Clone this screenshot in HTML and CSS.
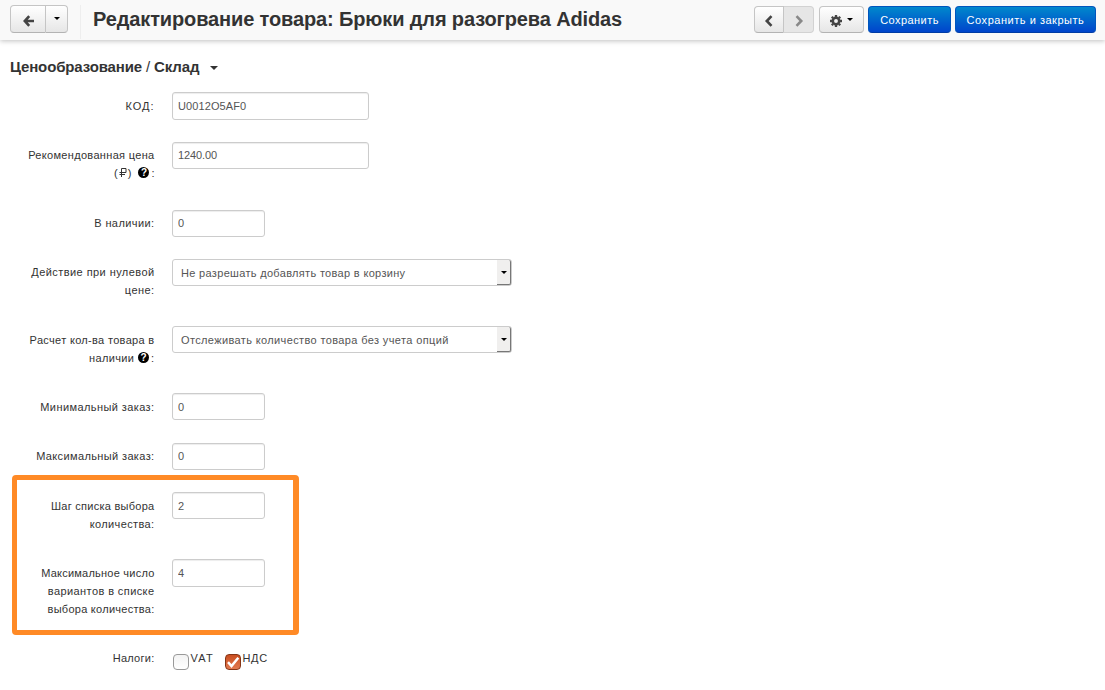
FILE: index.html
```
<!DOCTYPE html>
<html lang="ru">
<head>
<meta charset="utf-8">
<title>Редактирование товара</title>
<link rel="stylesheet" href="styles.css">
</head>
<body>
<header class="topbar">
  <div class="group back">
    <button class="btn back-main"><svg width="12" height="12" viewBox="0 0 12 12"><path d="M6.2 1.2 1.8 6l4.4 4.8M2 6h9" fill="none" stroke="#444" stroke-width="2.6"/></svg></button>
    <button class="btn back-drop"><i class="caret"></i></button>
  </div>
  <h1>Редактирование товара: Брюки для разогрева Adidas</h1>
  <div class="group pager">
    <button class="btn"><svg width="10" height="12" viewBox="0 0 10 12"><path d="M7.5 1.2 2.8 6l4.7 4.8" fill="none" stroke="#444" stroke-width="2.6"/></svg></button>
    <button class="btn disabled"><svg width="10" height="12" viewBox="0 0 10 12"><path d="M2.5 1.2 7.2 6l-4.7 4.8" fill="none" stroke="#888" stroke-width="2.6"/></svg></button>
  </div>
  <button class="btn gear"><svg width="12" height="12" viewBox="0 0 12 12"><circle cx="6" cy="6" r="3.2" fill="none" stroke="#444" stroke-width="2.5"/><path d="M6 0v2M6 10v2M0 6h2M10 6h2M1.8 1.8l1.3 1.3M8.9 8.9l1.3 1.3M10.2 1.8 8.9 3.1M3.1 8.9l-1.3 1.3" stroke="#444" stroke-width="2.3"/></svg><i class="caret"></i></button>
  <button class="btn primary save">Сохранить</button>
  <button class="btn primary close">Сохранить и закрыть</button>
</header>
<main>
  <h2><span>Ценообразование <span class="slash">/</span> Склад</span><i class="caret"></i></h2>
  <form class="fields">
    <label class="caps">КОД:</label><div><input class="wide code" value="U0012O5AF0"></div>
    <label class="up"><span class="ls3">Рекомендованная цена</span><br>(<svg class="rub" width="9" height="9" viewBox="0 0 9 9"><path d="M2.5 9V.5h4.5v4H.5M.5 6.5h5.5" fill="none" stroke="#333"/></svg>) <i class="help"><b>?</b></i>:</label><div><input class="wide price" value="1240.00"></div>
    <label class="up ls4">В наличии:</label><div><input class="raised" value="0"></div>
    <label class="up ls45">Действие при нулевой<br>цене:</label><div><div class="select"><span class="ls3">Не разрешать добавлять товар в корзину</span><i class="arrow"><i class="caret"></i></i></div></div>
    <label class="ls3">Расчет кол-ва товара в<br>наличии<i class="help"><b>?</b></i>:</label><div><div class="select"><span class="ls37">Отслеживать количество товара без учета опций</span><i class="arrow"><i class="caret"></i></i></div></div>
    <label class="ls4">Минимальный заказ:</label><div><input value="0"></div>
    <label class="up ls37">Максимальный заказ:</label><div><input class="raised" value="0"></div>
    <label><span class="ls27">Шаг списка выбора</span><br><span class="ls37">количества:</span></label><div><input value="2"></div>
    <label><span class="ls23">Максимальное число</span><br><span class="ls4">вариантов в списке</span><br><span class="ls27">выбора количества:</span></label><div><input class="code" value="4"></div>
    <label class="up ls27">Налоги:</label>
    <div class="taxes"><i class="check"></i><span class="vat">VAT</span><i class="check on"><svg width="14" height="14" viewBox="0 0 14 14"><path d="M2 7.2 5.5 11 12.3 2.8" fill="none" stroke="#fff" stroke-width="2.5"/></svg></i><span class="nds">НДС</span></div>
  </form>
  <div class="highlight"></div>
</main>
</body>
</html>
```
FILE: styles.css
```
* { box-sizing: border-box; }
body { margin: 0; width: 1105px; height: 690px; overflow: hidden; background: #fff; color: #333; font: 11px/18px "Liberation Sans", Arial, sans-serif; }
.topbar { display: flex; align-items: flex-start; height: 40px; padding: 6px 9px 0 10px; background: #f9f9f9; box-shadow: 0 1px 5px rgba(0,0,0,.25); }
.group { display: flex; }
.btn { display: flex; align-items: center; justify-content: center; height: 27px; padding: 0; border: 1px solid #c5c5c5; border-bottom-color: #b3b3b3; border-radius: 4px; background: linear-gradient(#fff, #e6e6e6); font: 11px/18px "Liberation Sans", Arial, sans-serif; color: #333; }
.group .btn:first-child { border-radius: 4px 0 0 4px; }
.group .btn:last-child { border-radius: 0 4px 4px 0; border-left: 0; }
.back { margin-top: -1px; }
.back .btn { height: 28px; }
.back-main { width: 36px; }
.back-main svg { margin: 3px 0 0 1px; }
.back-drop { width: 22px; }
.caret { display: block; border: 3px solid transparent; border-top-color: #000; border-bottom: 0; }
.back-drop .caret, .gear .caret { margin-bottom: 1px; }
h1 { flex: 1; height: 34px; margin: -1px 0 0 12px; padding-left: 12px; border-left: 1px solid #eee; font-size: 20px; line-height: 28px; letter-spacing: -.13px; white-space: nowrap; }
.pager .btn { width: 30px; }
.pager .btn svg, .gear svg { margin-top: 3px; }
.pager .disabled { background: #e6e6e6; border-color: #d2d2d2; }
.gear { width: 45px; margin-left: 5px; gap: 5px; }
.primary { margin-left: 4px; color: #fff; border-color: #0055bd #0055bd #003ca5; background: linear-gradient(#0088cc, #0044cc); white-space: nowrap; }
.save { width: 83px; letter-spacing: .45px; }
.close { width: 141px; letter-spacing: .53px; }
h2 { display: flex; align-items: center; gap: 11px; height: 20px; margin: 17px 0 15px 10px; font-size: 15px; line-height: 20px; letter-spacing: -.14px; white-space: nowrap; }
.slash { font-weight: normal; }
h2 .caret { border-width: 4px 4px 0; border-top-color: #333; margin-top: 2px; }
.fields { display: grid; grid-template-columns: 155px 1fr; column-gap: 17px; grid-template-rows: 50px 68px 49px 67px 67px 50px 49px 67px 86px 40px; }
label { padding: 5px .5px 0 0; text-align: right; white-space: nowrap; }
.up { padding-top: 4px; }
.caps { letter-spacing: 1px; }
.ls23 { letter-spacing: .23px; }
.ls27 { letter-spacing: .27px; }
.ls3 { letter-spacing: .32px; }
.ls37 { letter-spacing: .37px; }
.ls4 { letter-spacing: .41px; }
.ls45 { letter-spacing: .43px; }
input { display: block; width: 93px; height: 27px; margin: 0; padding: 0 5px; border: 1px solid #ccc; border-radius: 3px; box-shadow: inset 0 1px 1px rgba(0,0,0,.075); font: 11px/18px "Liberation Sans", Arial, sans-serif; color: #555; }
.wide { width: 197px; }
.code { height: 28px; letter-spacing: .1px; }
.price { letter-spacing: -.1px; }
.price, .raised { padding-bottom: 1px; }
.rub { margin-left: 1px; vertical-align: 0; }
.help { display: inline-flex; align-items: center; justify-content: center; width: 11px; height: 11px; margin: 0 2px 0 4px; border-radius: 50%; background: #000; color: #fff; font: 10px/11px "Liberation Sans", Arial, sans-serif; letter-spacing: 0; vertical-align: 1px; }
.select { display: flex; justify-content: space-between; width: 340px; height: 27px; padding-left: 8px; border: 1px solid #ccc; border-radius: 3px; color: #555; line-height: 27px; white-space: nowrap; }
.arrow { display: flex; align-items: center; justify-content: center; width: 14px; height: 25px; background: #f0efee; border-right: 1px solid #777; border-bottom: 1px solid #777; border-radius: 0 2px 2px 0; }
.taxes { display: flex; align-items: flex-start; padding: 4px 0 0 1px; }
.check { width: 16px; height: 16px; margin-top: 5px; border: 1px solid #999; border-radius: 4px; background: linear-gradient(#f3f3f3, #fff); }
.on { margin-left: 11px; border-color: #863516; background: linear-gradient(#c94e20, #e27a50); }
.on svg { display: block; }
.vat, .nds { margin-left: 1.5px; letter-spacing: 1.2px; }
.nds { letter-spacing: .8px; }
.highlight { position: absolute; left: 12px; top: 475px; width: 287px; height: 160px; border: 5px solid #ff8a26; border-right-width: 6px; border-radius: 4px; }
```
